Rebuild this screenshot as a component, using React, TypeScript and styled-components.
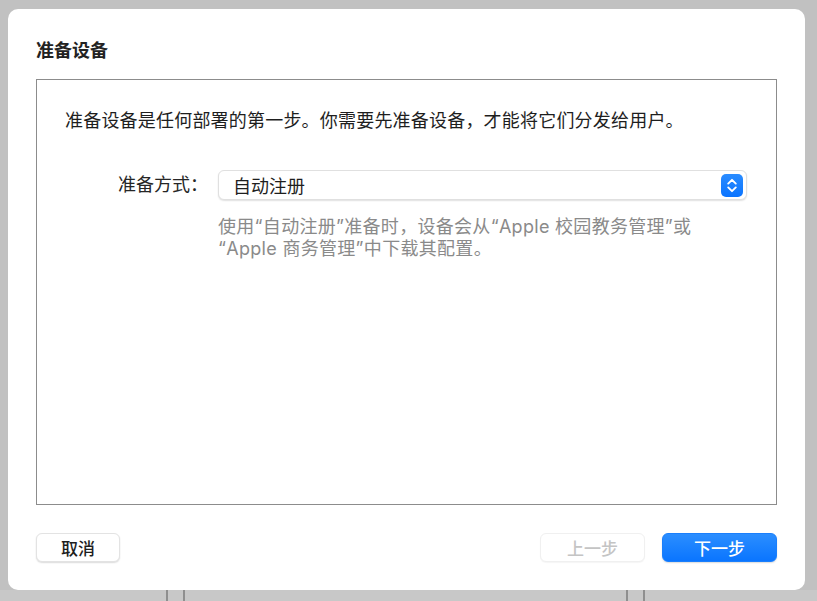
import React from 'react'
import styled, { createGlobalStyle } from 'styled-components'

const GlobalStyle = createGlobalStyle`
  html, body {
    margin: 0;
    padding: 0;
    background-color: #c1c1c1;
  }
  body {
    font-family: "Inter", "Noto Sans CJK SC", sans-serif;
    -webkit-font-smoothing: antialiased;
  }
`

const Page = styled.div`
  width: 817px;
  height: 601px;
  display: flex;
  flex-direction: column;
  padding-top: 9px;
  box-sizing: border-box;
  overflow: hidden;
`

const DialogRow = styled.div`
  display: flex;
  padding: 0 12px 0 8px;
`

const Dialog = styled.div`
  width: 797px;
  height: 581px;
  box-sizing: border-box;
  background-color: #ffffff;
  border-radius: 10px;
  padding: 30px 28px 28px 28px;
  display: flex;
  flex-direction: column;
`

const Title = styled.h2`
  margin: 0;
  font-size: 18px;
  line-height: 24px;
  font-weight: 600;
  color: #222222;
`

const ContentBox = styled.div`
  margin-top: 16px;
  flex: 1;
  border: 1px solid #8c8c8c;
  padding: 29px 29px 0 28px;
`

const Intro = styled.p`
  margin: 0;
  font-size: 18px;
  line-height: 24px;
  letter-spacing: 0.2px;
  color: #1e1e1e;
`

const FormRow = styled.div`
  margin-top: 37px;
  display: flex;
  align-items: center;
`

const Label = styled.label`
  width: 143px;
  padding-right: 10px;
  text-align: right;
  font-size: 18px;
  line-height: 24px;
  color: #262626;
`

const Popup = styled.div`
  flex: 1;
  height: 30px;
  box-sizing: border-box;
  display: flex;
  align-items: center;
  justify-content: space-between;
  padding: 0 3px 0 14px;
  border-radius: 6px;
  background-color: #ffffff;
  border: 1px solid #e0e0e0;
  box-shadow: 0 1px 1.5px rgba(0, 0, 0, 0.12);
  font-size: 18px;
  color: #1e1e1e;
`

const Help = styled.p`
  margin: 16px 0 0 153px;
  font-size: 18px;
  line-height: 22px;
  letter-spacing: 0.3px;
  color: #8a8a8a;
`

const Footer = styled.div`
  margin-top: 28px;
  display: flex;
  align-items: center;
  gap: 17px;
`

const Spacer = styled.div`
  flex: 1;
`

const Button = styled.button<{ $width: number; $kind?: 'primary' | 'disabled' }>`
  width: ${props => props.$width}px;
  height: 29px;
  border-radius: 6px;
  font-family: inherit;
  font-size: 17px;
  font-weight: 500;
  padding: 0;
  cursor: default;
  border: 1px solid ${props => props.$kind === 'primary' ? '#1a7ffc' : props.$kind === 'disabled' ? '#f0f0f0' : '#e3e3e3'};
  background: ${props => props.$kind === 'primary' ? 'linear-gradient(#2b8eff, #0a75ff)' : '#ffffff'};
  color: ${props => props.$kind === 'primary' ? '#ffffff' : props.$kind === 'disabled' ? '#c4c4c4' : '#1e1e1e'};
  box-shadow: ${props => props.$kind === 'disabled' ? '0 1px 1px rgba(0, 0, 0, 0.04)' : '0 1px 1.5px rgba(0, 0, 0, 0.14)'};
`

const Backdrop = styled.div`
  height: 11px;
  display: flex;
  background-color: #c8c8c8;
  padding-left: 166px;
`

const BackdropEdge = styled.div<{ $gap: number }>`
  width: 2px;
  margin-right: ${props => props.$gap}px;
  background-color: #8f8f8f;
`

const Stepper = () => (
  <svg width="22" height="23" viewBox="0 0 22 23">
    <defs>
      <linearGradient id="stepperFill" x1="0" y1="0" x2="0" y2="1">
        <stop offset="0" stopColor="#2a8cff" />
        <stop offset="1" stopColor="#0b74ff" />
      </linearGradient>
    </defs>
    <rect x="0" y="0" width="22" height="23" rx="5" fill="url(#stepperFill)" />
    <path d="M7.2 9.6 L11 5.8 L14.8 9.6" fill="none" stroke="#ffffff" strokeWidth="1.9" strokeLinecap="round" strokeLinejoin="round" />
    <path d="M7.2 13.4 L11 17.2 L14.8 13.4" fill="none" stroke="#ffffff" strokeWidth="1.9" strokeLinecap="round" strokeLinejoin="round" />
  </svg>
)

export default function App() {
  return (
    <>
      <GlobalStyle />
      <Page>
        <DialogRow>
          <Dialog>
            <Title>准备设备</Title>
            <ContentBox>
              <Intro>准备设备是任何部署的第一步。你需要先准备设备，才能将它们分发给用户。</Intro>
              <FormRow>
                <Label>准备方式：</Label>
                <Popup>
                  <span>自动注册</span>
                  <Stepper />
                </Popup>
              </FormRow>
              <Help>
                使用“自动注册”准备时，设备会从“Apple 校园教务管理”或
                <br />
                “Apple 商务管理”中下载其配置。
              </Help>
            </ContentBox>
            <Footer>
              <Button $width={84}>取消</Button>
              <Spacer />
              <Button $width={105} $kind="disabled">上一步</Button>
              <Button $width={115} $kind="primary">下一步</Button>
            </Footer>
          </Dialog>
        </DialogRow>
        <Backdrop>
          <BackdropEdge $gap={15} />
          <BackdropEdge $gap={441} />
          <BackdropEdge $gap={15} />
          <BackdropEdge $gap={0} />
        </Backdrop>
      </Page>
    </>
  )
}
